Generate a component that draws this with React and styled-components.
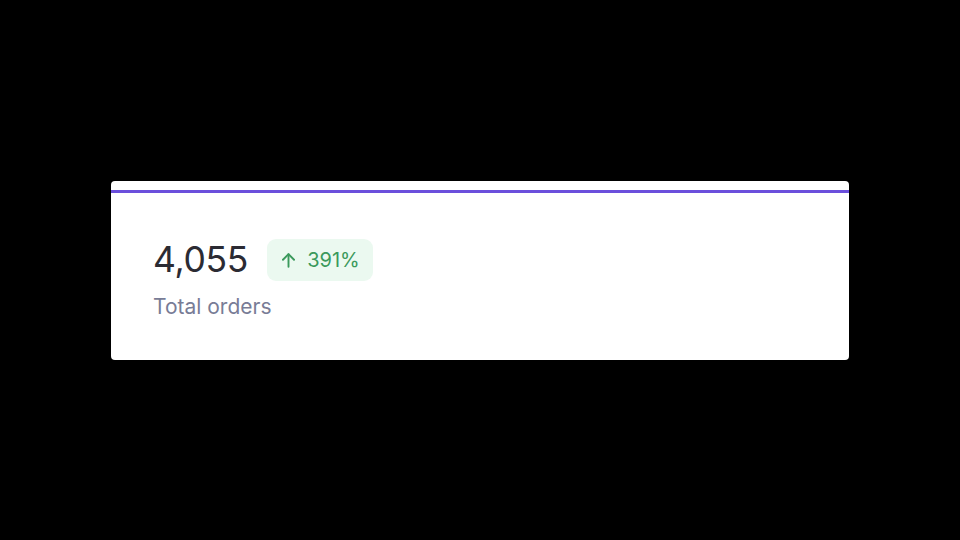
import styled, { createGlobalStyle } from 'styled-components';

const GlobalStyle = createGlobalStyle`
    html, body {
        margin: 0;
        padding: 0;
        background: #000;
        font-family: Inter, "Noto Sans", sans-serif;
    }
`

const Page = styled.div`
    width: 960px;
    height: 540px;
    display: flex;
    align-items: center;
    justify-content: center;
`

const Card = styled.div`
    width: 738px;
    height: 179px;
    margin-top: 1px;
    background: #fff;
    border-radius: 4px;
    padding-top: 9px;
    box-sizing: border-box;
`

const AccentBar = styled.div`
    height: 3px;
    background: ${props => props.$color};
`

const Body = styled.div`
    padding: 46px 42px 0;
`

const StatRow = styled.div`
    display: flex;
    align-items: center;
    gap: 19px;
`

const Value = styled.div`
    font-size: 35.5px;
    line-height: 42px;
    font-weight: 400;
    color: #2b2b33;
    letter-spacing: -0.3px;
`

const Badge = styled.div`
    display: flex;
    align-items: center;
    gap: 9px;
    height: 42px;
    padding: 0 13px 0 12px;
    border-radius: 9px;
    background: #ebf9f0;
    color: #3b9a5c;
    font-size: 20px;
`

const Label = styled.div`
    margin-top: 13px;
    font-size: 21px;
    color: #787c96;
`

const ArrowUp = () => (
    <svg width="19" height="19" viewBox="0 0 24 24" fill="none" stroke="currentColor" strokeWidth="2.4" strokeLinecap="round" strokeLinejoin="round">
        <path d="M12 20V4" />
        <path d="M5 11l7-7 7 7" />
    </svg>
)

const App = () => {
    return (
        <>
            <GlobalStyle />
            <Page>
                <Card>
                    <AccentBar $color="#6b4fdc" />
                    <Body>
                        <StatRow>
                            <Value>4,055</Value>
                            <Badge>
                                <ArrowUp />
                                <span>391%</span>
                            </Badge>
                        </StatRow>
                        <Label>Total orders</Label>
                    </Body>
                </Card>
            </Page>
        </>
    )
}

export default App
